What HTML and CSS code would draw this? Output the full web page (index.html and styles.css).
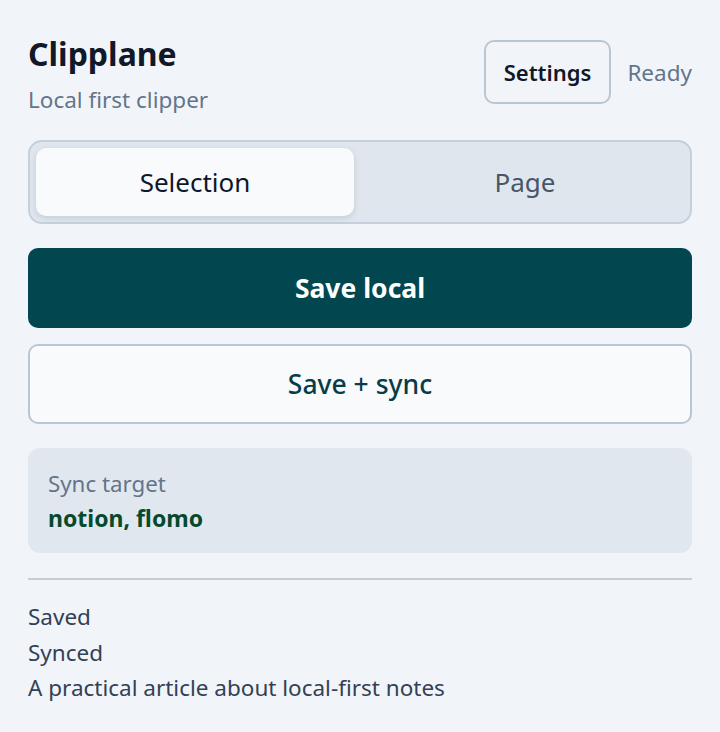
FILE: index.html
```html
<!DOCTYPE html>
<html lang="en">

<head>
  <meta charset="UTF-8" />
  <meta name="viewport" content="width=device-width, initial-scale=1.0" />
  <title>Clipplane</title>
  <link rel="stylesheet" href="styles.css">
</head>

<body>
  <div class="popup">
    <header class="top">
      <div>
        <h1>Clipplane</h1>
        <p class="tagline">Local first clipper</p>
      </div>
      <div class="top-actions">
        <button class="settings-btn">Settings</button>
        <span class="status">Ready</span>
      </div>
    </header>

    <div class="mode-switch">
      <button class="mode active">Selection</button>
      <button class="mode">Page</button>
    </div>

    <button class="save-btn primary">Save local</button>
    <button class="save-btn secondary">Save + sync</button>

    <div class="targets">
      <span class="targets-label">Sync target</span>
      <strong class="targets-list">notion, flomo</strong>
    </div>

    <hr class="divider">

    <ul class="log">
      <li>Saved</li>
      <li>Synced</li>
      <li>A practical article about local-first notes</li>
    </ul>
  </div>
</body>

</html>
```

FILE: styles.css
```css
body {
  margin: 0;
  background-color: #f1f5f9;
  font-family: "Noto Sans", sans-serif;
  color: #0f172a;
}

.popup {
  padding: 28px 28px;
  display: flex;
  flex-direction: column;
}

.top {
  display: flex;
  justify-content: space-between;
  align-items: flex-start;
}

h1 {
  margin: 0;
  font-size: 32px;
  line-height: 52px;
  font-weight: 700;
  color: #111827;
}

.tagline {
  margin: 2px 0 0;
  font-size: 22.5px;
  line-height: 36px;
  color: #64748b;
}

.top-actions {
  display: flex;
  align-items: center;
  gap: 16px;
  margin-top: 12px;
}

.settings-btn {
  font-family: inherit;
  font-size: 22px;
  font-weight: 600;
  color: #111827;
  background-color: #f1f5f9;
  border: 2px solid #b9c6d5;
  border-radius: 10px;
  padding: 0 18px;
  height: 64px;
  cursor: pointer;
}

.status {
  font-size: 22.5px;
  color: #64748b;
}

.mode-switch {
  margin-top: 22px;
  display: grid;
  grid-template-columns: 1fr 1fr;
  gap: 12px;
  padding: 6px;
  background-color: #dfe6ee;
  border: 2px solid #c6d0dc;
  border-radius: 14px;
}

.mode {
  font-family: inherit;
  font-size: 26px;
  height: 68px;
  border: none;
  border-radius: 10px;
  background: transparent;
  color: #475569;
  cursor: pointer;
}

.mode.active {
  background-color: #f8fafc;
  color: #0f172a;
  box-shadow: 0 2px 6px rgba(15, 23, 42, 0.12);
}

.save-btn {
  font-family: inherit;
  font-size: 26.5px;
  height: 80px;
  border-radius: 10px;
  cursor: pointer;
}

.primary {
  margin-top: 24px;
  background-color: #02474f;
  color: #ffffff;
  font-weight: 700;
  border: none;
}

.secondary {
  margin-top: 16px;
  background-color: #f8fafc;
  color: #073d47;
  font-weight: 500;
  border: 2px solid #b9c6d5;
}

.targets {
  margin-top: 24px;
  background-color: #e1e7ee;
  border-radius: 12px;
  padding: 20px 20px 19px;
  display: flex;
  flex-direction: column;
  gap: 2px;
}

.targets-label {
  font-size: 22.3px;
  line-height: 32px;
  color: #64748b;
}

.targets-list {
  font-size: 23px;
  line-height: 32px;
  color: #064a2e;
}

.divider {
  margin: 25px 0 19px;
  border: none;
  border-top: 2px solid #c5ccd6;
}

.log {
  list-style: none;
  margin: 0;
  padding: 0;
  font-size: 22.5px;
  line-height: 35.5px;
  color: #334155;
}
```
